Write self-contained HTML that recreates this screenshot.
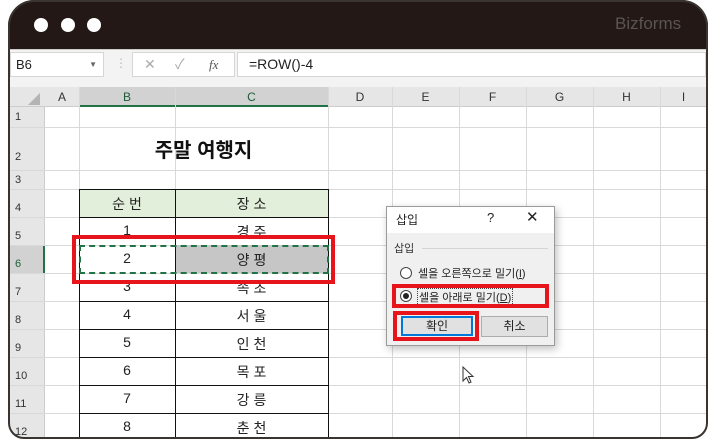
<!DOCTYPE html><html><head><meta charset="utf-8"><style>
*{margin:0;padding:0;box-sizing:border-box}
body{width:715px;height:440px;background:#fff;position:relative;overflow:hidden;font-family:"Liberation Sans","Noto Sans CJK KR",sans-serif}
.a{position:absolute}
.vl{position:absolute;width:1px;background:#d9d9d9}
.hl{position:absolute;height:1px;background:#d9d9d9}
.ch{position:absolute;top:88px;height:19px;font-size:12px;color:#333;text-align:center;line-height:19px}
.rh{position:absolute;left:10px;width:35px;font-size:11px;color:#333;padding-left:5px}
.c{position:absolute;text-align:center;font-size:14px;color:#222}
#w{position:absolute;left:0;top:0;width:715px;height:440px;clip-path:inset(0px 7px 1px 8px round 26px 26px 16px 16px)}
</style></head><body>
<div id="w">
<div class="a" style="left:8px;top:0;width:700px;height:49px;background:#231815"></div>
<div class="a" style="left:34px;top:18px;width:14px;height:14px;border-radius:50%;background:#fff"></div>
<div class="a" style="left:61px;top:18px;width:14px;height:14px;border-radius:50%;background:#fff"></div>
<div class="a" style="left:87px;top:18px;width:14px;height:14px;border-radius:50%;background:#fff"></div>
<div class="a" style="left:615px;top:14px;font-size:17px;color:#5a5552">Bizforms</div>
<div class="a" style="left:10px;top:49px;width:696px;height:38px;background:#f3f3f3;border-top:1px solid #ccc"></div>
<div class="a" style="left:10px;top:52px;width:94px;height:25px;background:#fff;border:1px solid #d6d6d6;font-size:13px;line-height:23px;padding-left:5px;color:#222">B6<span style="position:absolute;right:6px;top:0;font-size:8px;color:#666">▼</span></div>
<div class="a" style="left:115px;top:56px;font-size:12px;color:#bbb">⋮</div>
<div class="a" style="left:132px;top:52px;width:103px;height:25px;background:#fff;border:1px solid #d6d6d6;font-size:14px;line-height:23px;color:#aaa"><span style="position:absolute;left:11px">✕</span><span style="position:absolute;left:42px">✓</span><span style="position:absolute;left:76px;font-family:'Liberation Serif',serif;font-style:italic;color:#555;font-size:13px">fx</span></div>
<div class="a" style="left:237px;top:52px;width:469px;height:25px;background:#fff;border:1px solid #d6d6d6;font-size:14px;line-height:23px;padding-left:11px;color:#222">=ROW()-4</div>
<div class="a" style="left:10px;top:87px;width:696px;height:20px;background:#e6e6e6;border-bottom:1px solid #ccc"></div>
<div class="a" style="left:10px;top:107px;width:35px;height:335px;background:#e6e6e6;border-right:1px solid #ccc"></div>
<div class="a" style="left:79px;top:87px;width:249px;height:20px;background:#d2d2d2;border-bottom:2px solid #217346"></div>
<div class="a" style="left:10px;top:245px;width:35px;height:28px;background:#d2d2d2;border-right:2px solid #217346"></div>
<div class="a" style="left:28px;top:93px;width:0;height:0;border-left:12px solid transparent;border-bottom:12px solid #b4b4b4"></div>
<div class="ch" style="left:45px;width:34px">A</div>
<div class="ch" style="left:79px;width:96px;color:#1e5c3a">B</div>
<div class="ch" style="left:175px;width:153px;color:#1e5c3a">C</div>
<div class="ch" style="left:328px;width:64px">D</div>
<div class="ch" style="left:392px;width:67px">E</div>
<div class="ch" style="left:459px;width:67px">F</div>
<div class="ch" style="left:526px;width:67px">G</div>
<div class="ch" style="left:593px;width:67px">H</div>
<div class="ch" style="left:660px;width:47px">I</div>
<div class="vl" style="left:79px;top:87px;height:355px"></div>
<div class="vl" style="left:175px;top:87px;height:355px"></div>
<div class="vl" style="left:328px;top:87px;height:355px"></div>
<div class="vl" style="left:392px;top:87px;height:355px"></div>
<div class="vl" style="left:459px;top:87px;height:355px"></div>
<div class="vl" style="left:526px;top:87px;height:355px"></div>
<div class="vl" style="left:593px;top:87px;height:355px"></div>
<div class="vl" style="left:660px;top:87px;height:355px"></div>
<div class="hl" style="left:10px;top:127px;width:696px"></div>
<div class="hl" style="left:10px;top:170px;width:696px"></div>
<div class="hl" style="left:10px;top:189px;width:696px"></div>
<div class="hl" style="left:10px;top:217px;width:696px"></div>
<div class="hl" style="left:10px;top:245px;width:696px"></div>
<div class="hl" style="left:10px;top:273px;width:696px"></div>
<div class="hl" style="left:10px;top:301px;width:696px"></div>
<div class="hl" style="left:10px;top:329px;width:696px"></div>
<div class="hl" style="left:10px;top:357px;width:696px"></div>
<div class="hl" style="left:10px;top:385px;width:696px"></div>
<div class="hl" style="left:10px;top:413px;width:696px"></div>
<div class="rh" style="top:111px">1</div>
<div class="rh" style="top:151px">2</div>
<div class="rh" style="top:174px">3</div>
<div class="rh" style="top:202px">4</div>
<div class="rh" style="top:230px">5</div>
<div class="rh" style="top:258px;color:#1e5c3a">6</div>
<div class="rh" style="top:286px">7</div>
<div class="rh" style="top:314px">8</div>
<div class="rh" style="top:342px">9</div>
<div class="rh" style="top:370px">10</div>
<div class="rh" style="top:398px">11</div>
<div class="rh" style="top:426px">12</div>
<div class="a" style="left:79px;top:134px;width:249px;text-align:center;font-size:20px;font-weight:bold;color:#111">주말 여행지</div>
<div class="a" style="left:79px;top:189px;width:249px;height:28px;background:#e2efda"></div>
<div class="a" style="left:175px;top:245px;width:153px;height:28px;background:#c6c6c6"></div>
<div class="a" style="left:79px;top:189px;width:250px;height:255px;border:1px solid #111;border-bottom:none"></div>
<div class="a" style="left:175px;top:189px;width:1px;height:255px;background:#111"></div>
<div class="a" style="left:79px;top:217px;width:250px;height:1px;background:#111"></div>
<div class="a" style="left:79px;top:301px;width:250px;height:1px;background:#111"></div>
<div class="a" style="left:79px;top:329px;width:250px;height:1px;background:#111"></div>
<div class="a" style="left:79px;top:357px;width:250px;height:1px;background:#111"></div>
<div class="a" style="left:79px;top:385px;width:250px;height:1px;background:#111"></div>
<div class="a" style="left:79px;top:413px;width:250px;height:1px;background:#111"></div>
<div class="c" style="left:79px;top:194px;width:96px">순 번</div><div class="c" style="left:175px;top:194px;width:153px">장 소</div>
<div class="c" style="left:79px;top:222px;width:96px">1</div><div class="c" style="left:175px;top:222px;width:153px">경 주</div>
<div class="c" style="left:79px;top:250px;width:96px">2</div><div class="c" style="left:175px;top:250px;width:153px">양 평</div>
<div class="c" style="left:79px;top:278px;width:96px">3</div><div class="c" style="left:175px;top:278px;width:153px">속 초</div>
<div class="c" style="left:79px;top:306px;width:96px">4</div><div class="c" style="left:175px;top:306px;width:153px">서 울</div>
<div class="c" style="left:79px;top:334px;width:96px">5</div><div class="c" style="left:175px;top:334px;width:153px">인 천</div>
<div class="c" style="left:79px;top:362px;width:96px">6</div><div class="c" style="left:175px;top:362px;width:153px">목 포</div>
<div class="c" style="left:79px;top:390px;width:96px">7</div><div class="c" style="left:175px;top:390px;width:153px">강 릉</div>
<div class="c" style="left:79px;top:418px;width:96px">8</div><div class="c" style="left:175px;top:418px;width:153px">춘 천</div>
<div class="a" style="left:79px;top:245px;width:250px;height:29px;border:2px dashed #217346"></div>
<div class="a" style="left:72px;top:235px;width:263px;height:49px;border:4px solid #e8141b"></div>
<div class="a" style="left:386px;top:206px;width:169px;height:140px;background:#f0f0f0;border:1px solid #9a9a9a;box-shadow:2px 3px 8px rgba(0,0,0,.25)"></div>
<div class="a" style="left:387px;top:207px;width:167px;height:26px;background:#fff"></div>
<div class="a" style="left:396px;top:211px;font-size:12px;color:#222">삽입</div>
<div class="a" style="left:487px;top:210px;font-size:13px;color:#222">?</div>
<div class="a" style="left:526px;top:208px;font-size:15px;color:#222">✕</div>
<div class="a" style="left:394px;top:240px;font-size:11px;color:#333">삽입</div>
<div class="a" style="left:422px;top:248px;width:126px;height:1px;background:#d4d4d4"></div>
<div class="a" style="left:400px;top:267px;width:12px;height:12px;border:1px solid #444;border-radius:50%;background:#fff"></div>
<div class="a" style="left:418px;top:265px;font-size:11px;color:#222">셀을 오른쪽으로 밀기(<u>I</u>)</div>
<div class="a" style="left:400px;top:290px;width:12px;height:12px;border:1px solid #444;border-radius:50%;background:#fff"><div style="margin:2px;width:6px;height:6px;border-radius:50%;background:#222"></div></div>
<div class="a" style="left:417px;top:288px;font-size:11px;color:#222;border:1px dotted #444;padding:0 1px">셀을 아래로 밀기(<u>D</u>)</div>
<div class="a" style="left:392px;top:284px;width:157px;height:24px;border:4px solid #e8141b"></div>
<div class="a" style="left:401px;top:316px;width:72px;height:20px;background:#e1e1e1;border:2px solid #0078d7;font-size:12px;text-align:center;line-height:16px;color:#222">확인</div>
<div class="a" style="left:393px;top:311px;width:86px;height:30px;border:4px solid #e8141b"></div>
<div class="a" style="left:481px;top:316px;width:67px;height:21px;background:#e1e1e1;border:1px solid #adadad;font-size:12px;text-align:center;line-height:19px;color:#222">취소</div>
<svg class="a" style="left:462px;top:366px" width="14" height="20" viewBox="0 0 14 20"><path d="M1 1 L1 15 L4.5 11.5 L7 17 L9 16 L6.5 10.5 L11 10.5 Z" fill="#fff" stroke="#333" stroke-width="1"/></svg>
</div>
<div class="a" style="left:8px;top:0;width:700px;height:439px;border:2px solid #3a3431;border-radius:26px 26px 16px 16px"></div>
</body></html>
